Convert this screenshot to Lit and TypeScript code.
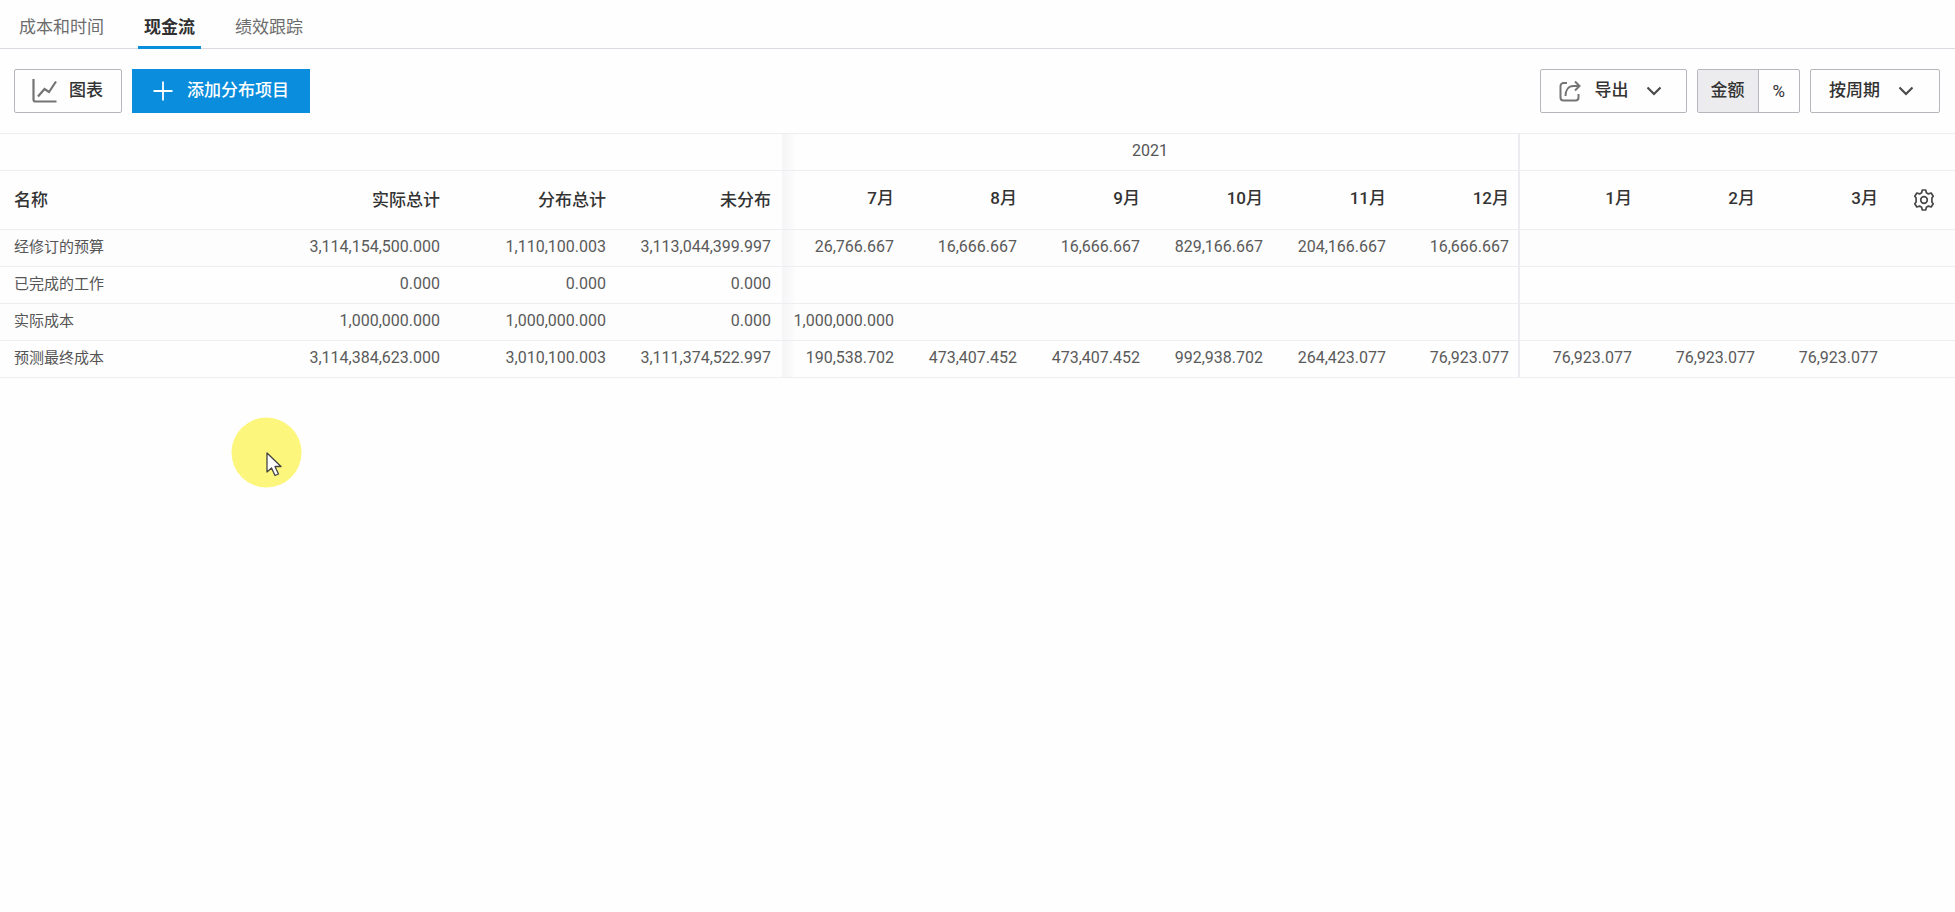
import { LitElement, html, css, svg } from "lit";
import { customElement, state } from "lit/decorators.js";

interface Row {
  name: string;
  totals: string[];
  months: string[];
}

const TABS = ["成本和时间", "现金流", "绩效跟踪"];
const TOTALS = ["实际总计", "分布总计", "未分布"];
const MONTHS = ["7月", "8月", "9月", "10月", "11月", "12月", "1月", "2月", "3月"];

const ROWS: Row[] = [
  {
    name: "经修订的预算",
    totals: ["3,114,154,500.000", "1,110,100.003", "3,113,044,399.997"],
    months: ["26,766.667", "16,666.667", "16,666.667", "829,166.667", "204,166.667", "16,666.667", "", "", ""],
  },
  {
    name: "已完成的工作",
    totals: ["0.000", "0.000", "0.000"],
    months: ["", "", "", "", "", "", "", "", ""],
  },
  {
    name: "实际成本",
    totals: ["1,000,000.000", "1,000,000.000", "0.000"],
    months: ["1,000,000.000", "", "", "", "", "", "", "", ""],
  },
  {
    name: "预测最终成本",
    totals: ["3,114,384,623.000", "3,010,100.003", "3,111,374,522.997"],
    months: [
      "190,538.702", "473,407.452", "473,407.452", "992,938.702", "264,423.077", "76,923.077",
      "76,923.077", "76,923.077", "76,923.077",
    ],
  },
];

const chartIcon = svg`<svg class="icon" width="26" height="26" viewBox="0 0 26 26" aria-hidden="true">
  <path d="M1.5 1v20.500a2 2 0 0 0 2 2H24.500" stroke-width="2.200"/><path d="M6 18.500l6.500-7.500 4.500 3 7-10.500" stroke-width="2.200"/></svg>`;
const plusIcon = svg`<svg class="icon plus" width="20" height="20" viewBox="0 0 20 20" aria-hidden="true">
  <path d="M10 .5v19M.5 10h19" stroke-width="1.800"/></svg>`;
const exportIcon = svg`<svg class="icon" width="22" height="22" viewBox="0 0 22 22" aria-hidden="true">
  <path d="M8 3H4.500a3 3 0 0 0-3 3v11.500a3 3 0 0 0 3 3h12a3 3 0 0 0 3-3V14" stroke-width="2"/>
  <path d="M6.500 16c0-6 3-10 8-10h6M16 1.500L20.500 6 16 10.500" stroke-width="2"/></svg>`;
const chevron = svg`<svg class="icon chevron" width="16" height="10" viewBox="0 0 16 10" aria-hidden="true">
  <path d="M1.500 1.500L8 8l6.500-6.500" stroke-width="2.100"/></svg>`;
const gearIcon = svg`<svg class="icon" width="22" height="22" viewBox="0 0 22 22" aria-hidden="true">
  <path class="gear" d="M9.300 1h3.400l.7 2.700 2 1.200 2.800-.9 2 3.200-1.300 1.800v4l1.300 1.800-2 3.200-2.800-.9-2 1.200-.7 2.700H9.300l-.7-2.700-2-1.200-2.800.9-2-3.200L3.100 13V9L1.800 7.200l2-3.200 2.800.9 2-1.200z" stroke-linejoin="round" stroke-width="1.700"/>
  <circle class="gear" cx="11" cy="11" r="3.300" stroke-width="1.700"/></svg>`;

@customElement("app-root")
export class AppRoot extends LitElement {
  @state() private tab = 1;
  @state() private unit = "amount";

  static styles = css`
    :host {
      display: block;
      position: relative;
      min-height: 100vh;
      background: #fefefe;
      color: #3c3c3c;
      font-family: Roboto, "Noto Sans CJK SC", sans-serif;
      font-size: 16px;
    }
    * { box-sizing: border-box; }
    button, select { font: inherit; color: inherit; margin: 0; cursor: pointer; }
    .icon { display: block; flex: none; fill: none; stroke: #747474; }
    .plus { stroke: #fff; }
    .chevron, .gear { stroke: #484848; }

    .tabs {
      display: flex;
      gap: 28px;
      padding: 0 13px;
      border-bottom: 1px solid #d9dbe0;
    }
    .tab {
      height: 49px;
      margin-bottom: -1px;
      padding: 7px 6px 0;
      border: 0;
      border-bottom: 3px solid transparent;
      background: none;
      color: #6c6c6c;
      font-size: 17px;
      line-height: 24px;
    }
    .tab.active { border-color: #0a8ddc; color: #303030; font-weight: 700; }

    .toolbar {
      display: flex;
      justify-content: space-between;
      padding: 20px 15px 20px 14px;
      font-size: 17px;
      font-weight: 500;
    }
    .group { display: flex; gap: 10px; }
    .btn {
      display: flex;
      align-items: center;
      gap: 14px;
      height: 44px;
      padding: 0 20px;
      border: 1px solid #b5b7bd;
      border-radius: 2px;
      background: #fefefe;
      color: #333;
      line-height: 24px;
    }
    .label { padding-bottom: 2px; }
    .chart { gap: 11px; padding: 0 18px 0 17px; }
    .primary { border-color: #0a8ddc; border-radius: 0; background: #0a8ddc; color: #fff; }
    .menu { padding: 0 24px 0 18px; }
    .menu .chevron { margin-left: 3px; }
    .switch { display: flex; height: 44px; border: 1px solid #b5b7bd; border-radius: 2px; overflow: hidden; }
    .option { padding: 0 13px 2px; border: 0; background: none; color: #333; line-height: 24px; }
    .option + .option { padding: 0 14px; border-left: 1px solid #b5b7bd; font-weight: 400; }
    .option.on { background: #ececee; }
    .picker { display: grid; align-items: center; }
    .picker > * { grid-area: 1 / 1; }
    .picker .chevron { justify-self: end; margin-right: 26px; pointer-events: none; }
    .select {
      appearance: none;
      width: 130px;
      height: 44px;
      padding: 0 44px 2px 18px;
      border: 1px solid #b5b7bd;
      border-radius: 2px;
      background: #fefefe;
      color: #333;
    }

    .grid { width: 100%; border-collapse: separate; border-spacing: 0; table-layout: fixed; border-top: 1px solid #eeeef2; }
    .c-name { width: 285px; }
    .c-total { width: 166px; }
    .c-last { width: 165px; }
    .c-month { width: 123px; }
    th, td { height: 37px; padding: 0 11px 2px 0; border-bottom: 1px solid #eeeef2; text-align: right; line-height: 20px; white-space: nowrap; }
    .name { padding-left: 14px; text-align: left; color: #555; font-size: 15px; font-weight: 400; }
    .years th { padding-right: 0; text-align: center; color: #555; font-weight: 400; }
    .heads th { height: 59px; color: #333; font-size: 17px; font-weight: 500; }
    .heads th, .heads td { padding-bottom: 0; }
    .heads .name { font-size: 17px; }
    .heads .month { padding-bottom: 4px; }
    tbody tr:nth-child(odd) { background: #fdfdfd; }
    tbody td { color: #5a5a5a; }
    .edge { background: linear-gradient(to right, #f5f5f7, #f9f9fa 8px, transparent 14px); }
    .year-end { border-right: 2px solid #ececf0; }
    .month.year-end { padding-right: 9px; }
    .settings { display: block; padding: 0; border: 0; background: none; margin-left: auto; margin-right: 9px; }

    .pointer { position: absolute; left: 231px; top: 417px; pointer-events: none; }
  `;

  private edgeClass(i: number) {
    return i === 0 ? "month edge" : i === 5 ? "month year-end" : "month";
  }

  render() {
    return html`
      <nav class="tabs" role="tablist" aria-label="视图">
        ${TABS.map(
          (label, i) => html`<button
            class="tab ${i === this.tab ? "active" : ""}"
            role="tab"
            aria-selected=${i === this.tab}
            @click=${() => (this.tab = i)}
          >${label}</button>`,
        )}
      </nav>
      <div class="toolbar">
        <div class="group">
          <button class="btn chart">${chartIcon}<span class="label">图表</span></button>
          <button class="btn primary">${plusIcon}<span class="label">添加分布项目</span></button>
        </div>
        <div class="group">
          <button class="btn menu" aria-haspopup="menu">${exportIcon}<span class="label">导出</span>${chevron}</button>
          <div class="switch">
            <button class="option ${this.unit === "amount" ? "on" : ""}" aria-pressed=${this.unit === "amount"}
              @click=${() => (this.unit = "amount")}>金额</button>
            <button class="option ${this.unit === "percent" ? "on" : ""}" aria-pressed=${this.unit === "percent"}
              @click=${() => (this.unit = "percent")}>%</button>
          </div>
          <label class="picker">
            <select class="select" aria-label="周期"><option>按周期</option></select>
            ${chevron}
          </label>
        </div>
      </div>
      <table class="grid">
        <colgroup>
          <col class="c-name" /><col class="c-total" /><col class="c-total" /><col class="c-last" />
          ${MONTHS.map(() => html`<col class="c-month" />`)}
          <col />
        </colgroup>
        <thead>
          <tr class="years">
            <td colspan="4"></td>
            <th class="edge year-end" colspan="6" scope="colgroup">2021</th>
            <td colspan="4"></td>
          </tr>
          <tr class="heads">
            <th class="name" scope="col">名称</th>
            ${TOTALS.map((t) => html`<th scope="col">${t}</th>`)}
            ${MONTHS.map((m, i) => html`<th class=${this.edgeClass(i)} scope="col">${m}</th>`)}
            <td><button class="settings" aria-label="设置">${gearIcon}</button></td>
          </tr>
        </thead>
        <tbody>
          ${ROWS.map(
            (r) => html`<tr>
              <th class="name" scope="row">${r.name}</th>
              ${r.totals.map((v) => html`<td>${v}</td>`)}
              ${r.months.map((v, i) => html`<td class=${this.edgeClass(i)}>${v}</td>`)}
              <td></td>
            </tr>`,
          )}
        </tbody>
      </table>
      <svg class="pointer" width="71" height="71" viewBox="0 0 71 71" aria-hidden="true">
        <circle cx="35.500" cy="35.500" r="35" fill="#fdf67c" />
        <path d="M36 36v19l4.500-4 3.500 7.500 3.500-1.500-3.500-7.500h6z" fill="#fff" stroke="#444" stroke-width="1.300" stroke-linejoin="round" />
      </svg>
    `;
  }
}
